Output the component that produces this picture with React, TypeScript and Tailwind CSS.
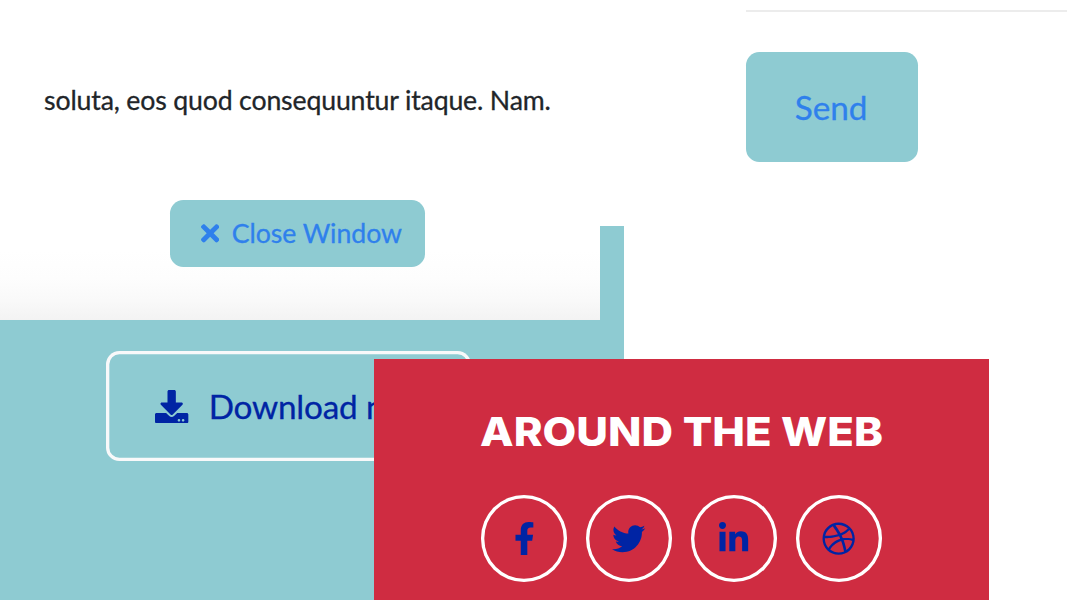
import { FaTimes, FaDownload, FaFacebookF, FaTwitter, FaLinkedinIn, FaDribbble } from "react-icons/fa";

const socials = [
  { label: "Facebook", icon: <FaFacebookF className="h-[33.33px] w-[20.83px]" /> },
  { label: "Twitter", icon: <FaTwitter className="h-[33.33px] w-[33.33px]" /> },
  { label: "LinkedIn", icon: <FaLinkedinIn className="h-[33.33px] w-[29.17px]" /> },
  { label: "Dribbble", icon: <FaDribbble className="h-[33.33px] w-[33.33px]" /> },
];

function ModalEnd() {
  return (
    <div className="flex h-[320px] w-[600px] flex-col items-center bg-[linear-gradient(to_bottom,#fff_78%,#fdfdfd_87%,#f9f9f9_94%,#f3f3f3_100%)] pt-20">
      <p className="h-10 whitespace-nowrap pr-[5px] text-[26.67px] leading-[40px] tracking-[-0.155px] text-[#212529] [-webkit-text-stroke:0.3px_currentColor]">
        soluta, eos quod consequuntur itaque. Nam.
      </p>
      <button className="mt-20 mr-[5px] flex h-[66.67px] w-[255px] items-center rounded-[13.33px] bg-[#8ecbd2] pl-[31px] text-[26.67px] leading-[40px] text-[#2f80ec]">
        <FaTimes className="h-[26.67px] w-[18.33px]" />
        <span className="ml-[12.5px] whitespace-nowrap tracking-[-0.05px] [-webkit-text-stroke:0.3px_currentColor]">Close Window</span>
      </button>
    </div>
  );
}

function AroundTheWeb() {
  return (
    <section className="absolute left-[374px] top-[359px] flex h-[241px] w-[615px] flex-col items-center bg-[#cf2c41]">
      <h4 className="mt-[49px] h-12 origin-center scale-x-[1.092] whitespace-nowrap font-['Inter',sans-serif] text-[40px] font-extrabold leading-[48px] text-white">
        AROUND THE WEB
      </h4>
      <div className="mt-[39.3px] flex gap-[18.33px]">
        {socials.map((s) => (
          <button
            key={s.label}
            aria-label={s.label}
            className="flex h-[86.67px] w-[86.67px] items-center justify-center rounded-full text-[#0024a4] shadow-[inset_0_0_0_3.33px_#fff]"
          >
            {s.icon}
          </button>
        ))}
      </div>
    </section>
  );
}

export default function App() {
  return (
    <main className="relative flex h-[600px] w-[1067px] overflow-hidden bg-white font-['Lato',sans-serif]">
      <div className="w-[624px]">
        <div className="flex h-[320px] items-end">
          <ModalEnd />
          <div className="h-[94.5px] w-[24.3px] shrink-0 bg-[#8ecbd2]" />
        </div>
        <div className="h-[280px] w-[624.3px] bg-[#8ecbd2] pl-[106px] pt-[30.5px]">
          <button className="flex h-[110px] w-[365px] items-center rounded-[13.33px] pl-[49.3px] text-[33.33px] leading-[50px] text-[#0024a4] shadow-[inset_0_0_0_3.33px_#f8f9fa]">
            <FaDownload className="mt-[2px] h-[33.33px] w-[33.33px]" />
            <span className="ml-[20px] whitespace-nowrap tracking-[-0.2px] [-webkit-text-stroke:0.3px_currentColor]">Download now</span>
          </button>
        </div>
      </div>
      <div className="flex flex-1 flex-col items-start pl-[122px] pt-[10px]">
        <div className="h-[2px] w-full bg-[#ececec]" />
        <button className="mt-[39.5px] flex h-[110px] w-[171.67px] items-center justify-center rounded-[13.33px] bg-[#8ecbd2] pr-[1.5px] pt-[1.5px] text-[33.33px] leading-[50px] text-[#2f80ec] [-webkit-text-stroke:0.3px_currentColor]">
          Send
        </button>
      </div>
      <AroundTheWeb />
    </main>
  );
}
